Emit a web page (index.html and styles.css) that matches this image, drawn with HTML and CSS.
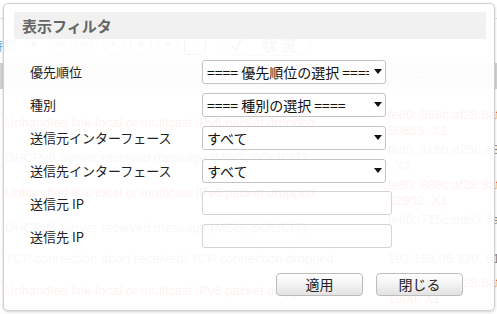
FILE: index.html
```html
<!DOCTYPE html>
<html lang="ja">
<head>
  <meta charset="UTF-8" />
  <title>表示フィルタ</title>
  <link rel="stylesheet" href="styles.css">
</head>
<body>
  <div class="page">
    <div class="topnav"></div>
    <div class="toolbar">
      <span class="tb-label">時間</span>
      <span class="tb-caret">▼</span>
      <span class="tb-icon">CSV</span>
      <span class="tb-icon">TXT</span>
      <span class="tb-icon">✎</span>
      <span class="tb-icon">✉</span>
      <span class="tb-icon">✉</span>
      <span class="tb-icon sq">▤</span>
      <span class="tb-status"><i>✓</i>状 況</span>
    </div>
    <div class="log-head"><span class="c-msg">メッセージ</span><span class="c-src">送信元</span></div>
    <div class="log">
      <div class="log-row red"><span class="c-msg">Unhandled link-local or multicast IPv6 packet dropped</span><span class="c-src">fe80::988c:af28:8af3<br>50855, X1</span></div>
      <div class="log-row"><span class="c-msg">DHCPv6 Server received message (MSG_SOLICIT)</span><span class="c-src">fe80::1c6b:d256:e8c1<br>, X2</span></div>
      <div class="log-row red"><span class="c-msg">Unhandled link-local or multicast IPv6 packet dropped</span><span class="c-src">fe80::988c:af28:8af3<br>52902, X1</span></div>
      <div class="log-row"><span class="c-msg">DHCPv6 Server received message (MSG_SOLICIT)</span><span class="c-src">fe80::715c:ddb3:7ac2<br>&nbsp;</span></div>
      <div class="log-row single"><span class="c-msg">TCP connection abort received; TCP connection dropped</span><span class="c-src">192.168.95.220, 51</span></div>
      <div class="log-row red"><span class="c-msg">Unhandled link-local or multicast IPv6 packet dropped</span><span class="c-src">fe80::988c:af28:8af3<br>1900, X1</span></div>
    </div>
  </div>

  <div class="dialog">
    <div class="dlg-title">表示フィルタ</div>
    <form class="filter">
      <label>優先順位</label>
      <span class="sel"><select><option>==== 優先順位の選択 ====</option></select></span>

      <label>種別</label>
      <span class="sel"><select><option>==== 種別の選択 ====</option></select></span>

      <label>送信元インターフェース</label>
      <span class="sel"><select><option>すべて</option></select></span>

      <label>送信先インターフェース</label>
      <span class="sel"><select><option>すべて</option></select></span>

      <label>送信元 IP</label>
      <input type="text" class="txt">

      <label>送信先 IP</label>
      <input type="text" class="txt">
    </form>
    <div class="actions">
      <button type="button" class="btn">適用</button>
      <button type="button" class="btn">閉じる</button>
    </div>
  </div>
</body>
</html>
```

FILE: styles.css
```css
body {
  margin: 0;
  width: 497px;
  height: 314px;
  overflow: hidden;
  position: relative;
  background: #fff;
  font-family: "Liberation Sans", "Noto Sans CJK JP", sans-serif;
}

/* page behind the dialog */
.page {
  color: #888;
}

.topnav {
  height: 18px;
  border-bottom: 1px solid #ddd;
}

.toolbar {
  display: flex;
  align-items: center;
  height: 20px;
  margin-top: 15px;
  gap: 5px;
}

.tb-label {
  margin-left: -10px;
  color: #7aaee0;
  font-size: 13px;
  width: 30px;
}

.tb-caret {
  color: #888;
  font-size: 9px;
  margin: 0 6px 0 4px;
}

.tb-icon {
  width: 20px;
  height: 20px;
  border: 1px solid #aaa;
  border-radius: 50%;
  font-size: 7px;
  font-weight: bold;
  display: flex;
  align-items: center;
  justify-content: center;
  color: #999;
}

.tb-icon.sq {
  border-radius: 2px;
  color: #4a4;
  border-color: #4a4;
}

.tb-status {
  margin-left: 10px;
  display: flex;
  align-items: center;
  gap: 14px;
  height: 22px;
  padding: 0 14px 0 4px;
  border: 1px solid #bbb;
  border-radius: 12px;
  font-size: 15px;
  font-weight: bold;
  color: #999;
}

.tb-status i {
  font-style: normal;
  width: 20px;
  height: 20px;
  border: 1px solid #9c9;
  border-radius: 50%;
  color: #6b6;
  display: flex;
  align-items: center;
  justify-content: center;
}

.log-head {
  display: flex;
  height: 26px;
  margin-top: 9px;
  align-items: center;
  background: #d2d2d2;
  color: #fff;
  font-size: 13px;
}

.c-msg {
  width: 383px;
  padding-left: 5px;
  flex: none;
}

.log-head .c-src {
  padding-top: 6px;
}

.log {
  padding-top: 16px;
}

.log-row {
  display: flex;
  align-items: center;
  height: 35px;
  font-size: 13px;
  line-height: 16px;
  white-space: nowrap;
}

.log-row.single {
  height: 28px;
}

.log-row.red {
  color: #e03c3c;
}

/* dialog */
.dialog {
  position: absolute;
  left: 3px;
  top: 3px;
  width: 472px;
  height: 298px;
  padding: 8px 8px 0 10px;
  background: rgba(255, 255, 255, 0.93);
  border: 1px solid #cfcfcf;
  border-radius: 5px;
  box-shadow: 0 1px 3px rgba(0, 0, 0, 0.18);
  font-family: "Noto Sans CJK JP", "Liberation Sans", sans-serif;
}

.dlg-title {
  height: 27px;
  line-height: 27px;
  padding-left: 8px;
  background: rgba(240, 240, 240, 0.9);
  color: #666;
  font-size: 15px;
  font-weight: bold;
}

.filter {
  display: grid;
  grid-template-columns: 172px auto;
  grid-auto-rows: 24px;
  row-gap: 9px;
  align-items: center;
  margin-top: 20px;
  padding-left: 16px;
}

.filter label {
  font-size: 13px;
  color: #222;
}

.sel {
  position: relative;
  width: 184px;
  height: 24px;
}

.sel select {
  appearance: none;
  -webkit-appearance: none;
  width: 184px;
  height: 24px;
  padding: 0 16px 0 4px;
  border: 1px solid #c4c4c4;
  border-radius: 3px;
  background: #fff;
  color: #111;
  font-family: "Noto Sans CJK JP", "Liberation Sans", sans-serif;
  font-size: 14px;
  outline: none;
}

/* little arrow on the right of each select */
.sel::after {
  content: "";
  position: absolute;
  right: 4px;
  top: 10px;
  border-left: 4px solid transparent;
  border-right: 4px solid transparent;
  border-top: 5px solid #111;
  pointer-events: none;
}

.txt {
  width: 190px;
  height: 24px;
  box-sizing: border-box;
  border: 1px solid #d4d4d8;
  border-radius: 3px;
  background: transparent;
  outline: none;
}

.actions {
  display: flex;
  justify-content: flex-end;
  gap: 13px;
  margin-top: 25px;
  padding-right: 23px;
}

.btn {
  width: 87px;
  height: 23px;
  border: 1px solid #bcbcbc;
  border-radius: 4px;
  background: linear-gradient(#ffffff, #f4f4f4 45%, #e2e2e2);
  color: #222;
  font-family: "Noto Sans CJK JP", "Liberation Sans", sans-serif;
  font-size: 14px;
  line-height: 19px;
  padding: 0;
  cursor: pointer;
}
```
